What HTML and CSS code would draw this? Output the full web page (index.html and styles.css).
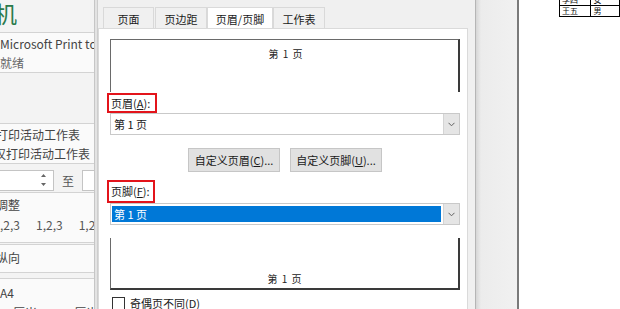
FILE: index.html
```html
<!DOCTYPE html>
<html lang="zh-CN">
<head>
    <meta charset="utf-8" />
    <title>页面设置</title>
    <link rel="stylesheet" href="styles.css">
</head>
<body>
    <div class="screen">
        <aside class="print-panel">
            <div class="panel-title"><span class="cut">打印</span>机</div>
            <div class="panel-box printer-box">
                <div class="line">Microsoft Print to PDF</div>
                <div class="line status">就绪</div>
            </div>
            <div class="panel-box what-box">
                <div class="line shift">打印活动工作表</div>
                <div class="line shift more">仅打印活动工作表</div>
            </div>
            <div class="pages-row">
                <div class="spin">
                    <span class="spin-arrows">
                        <svg width="7" height="16" viewBox="0 0 7 16"><path d="M1 5 L3.5 2 L6 5 Z M1 11 L3.5 14 L6 11 Z" fill="#666"/></svg>
                    </span>
                </div>
                <span class="to">至</span>
                <div class="spin short"></div>
            </div>
            <div class="panel-box collate-box">
                <div class="line shift">调整</div>
                <div class="collate">
                    <span>,2,3</span><span>1,2,3</span><span>1,2</span>
                </div>
            </div>
            <div class="panel-box orient-box">
                <div class="line shift">纵向</div>
            </div>
            <div class="panel-box paper-box">
                <div class="line">A4</div>
                <div class="line shift-small">21 厘米 x 29.7 厘米</div>
            </div>
        </aside>
        <div class="gap"></div>
        <section class="dialog">
            <div class="tabs">
                <div class="tab t1">页面</div>
                <div class="tab t2">页边距</div>
                <div class="tab t3 active">页眉/页脚</div>
                <div class="tab t4">工作表</div>
            </div>
            <div class="tab-panel">
                <div class="preview preview-top">第 1 页</div>
                <div class="mark mark-a"><span class="label">页眉(<u>A</u>):</span></div>
                <div class="combo">
                    <div class="combo-text">第 1 页</div>
                    <div class="combo-btn">
                        <svg width="7" height="5" viewBox="0 0 7 5"><path d="M0.5 0.8 L3.5 3.8 L6.5 0.8" fill="none" stroke="#606060" stroke-width="1"/></svg>
                    </div>
                </div>
                <div class="buttons">
                    <div class="btn">自定义页眉(<u>C</u>)...</div>
                    <div class="btn">自定义页脚(<u>U</u>)...</div>
                </div>
                <div class="mark mark-f"><span class="label">页脚(<u>F</u>):</span></div>
                <div class="combo">
                    <div class="combo-text selected">第 1 页</div>
                    <div class="combo-btn">
                        <svg width="7" height="5" viewBox="0 0 7 5"><path d="M0.5 0.8 L3.5 3.8 L6.5 0.8" fill="none" stroke="#606060" stroke-width="1"/></svg>
                    </div>
                </div>
                <div class="preview preview-bottom">第 1 页</div>
                <div class="check-row">
                    <span class="checkbox"></span>
                    <span>奇偶页不同(<u>D</u>)</span>
                </div>
            </div>
        </section>
        <div class="scroll-strip"></div>
        <div class="sheet">
            <table class="grid">
                <tr><td>李四</td><td>女</td></tr>
                <tr><td>王五</td><td>男</td></tr>
            </table>
        </div>
    </div>
</body>
</html>
```

FILE: styles.css
```css
body {
    margin: 0;
    font-family: "Noto Sans CJK SC", "Noto Sans", sans-serif;
    background: #ffffff;
}
.screen {
    display: flex;
    width: 620px;
    height: 309px;
    overflow: hidden;
    background: #f0f0f0;
}

/* left print settings panel */
.print-panel {
    width: 94px;
    flex: none;
    border-right: 1px solid #c6c6c6;
    background: #f3f3f3;
    overflow: hidden;
    font-size: 12px;
    color: #444;
    white-space: nowrap;
}
.panel-title {
    height: 32px;
    font-size: 23px;
    line-height: 26px;
    color: #2b7a4b;
    margin-left: -52px;
}
.cut {
    color: #2b7a4b;
}
.panel-box {
    background: #fafafa;
    border-top: 1px solid #d3d3d3;
    border-bottom: 1px solid #d3d3d3;
}
.line {
    line-height: 19px;
    height: 19px;
}
.shift {
    margin-left: -4px;
}
.more {
    margin-left: -6px;
}
.shift-small {
    margin-left: -3px;
}
.printer-box {
    height: 38px;
    padding-top: 1px;
}
.status {
    color: #666;
}
.what-box {
    margin-top: 50px;
    height: 38px;
    padding-top: 1px;
}
.pages-row {
    display: flex;
    align-items: center;
    height: 20px;
    margin-top: 6px;
}
.spin {
    width: 53px;
    height: 19px;
    background: #ffffff;
    border: 1px solid #c4c4c4;
    border-left: none;
    display: flex;
    justify-content: flex-end;
    align-items: center;
}
.spin.short {
    flex: 1;
    border-right: none;
    border-left: 1px solid #c4c4c4;
}
.spin-arrows {
    width: 9px;
    margin-right: 4px;
    display: flex;
}
.to {
    width: 28px;
    text-align: center;
    color: #555;
}
.collate-box {
    margin-top: 2px;
    height: 47px;
    padding-top: 2px;
}
.collate {
    display: flex;
    gap: 16px;
    line-height: 22px;
    color: #555;
}
.orient-box {
    margin-top: 1px;
    height: 25px;
    padding-top: 2px;
}
.orient-box .line {
    line-height: 22px;
}
.paper-box {
    margin-top: 5px;
    height: 40px;
    padding-top: 4px;
}
.paper-box .line {
    line-height: 20px;
    height: 20px;
}

.gap {
    width: 2px;
    flex: none;
    background: #e3e3e3;
    border-right: 1px solid #cdcdcd;
}

/* page setup dialog */
.dialog {
    width: 378px;
    flex: none;
    padding-right: 8px;
    box-sizing: border-box;
    border-right: 1px solid #b5b5b5;
    background: #f0f0f0;
    display: flex;
    flex-direction: column;
    font-size: 11px;
    color: #1a1a1a;
}
.tabs {
    display: flex;
    padding: 7px 0 0 5px;
    height: 21px;
}
.tab {
    height: 21px;
    line-height: 22px;
    text-align: center;
    border: 1px solid #d9d9d9;
    border-bottom: none;
    background: #f0f0f0;
    box-sizing: border-box;
}
.t1 { width: 51px; }
.t2 { width: 52px; margin-left: 1px; }
.t3 { width: 66px; }
.t4 { width: 52px; }
.tab.active {
    background: #ffffff;
    border-color: #dadada;
}
.tab-panel {
    flex: 1;
    width: 370px;
    box-sizing: border-box;
    background: #ffffff;
    border: 1px solid #dadada;
    border-bottom: none;
    padding: 0 7px 0 11px;
}
.preview {
    width: 350px;
    height: 53px;
    box-sizing: border-box;
    display: flex;
    justify-content: center;
    font-size: 10px;
    color: #222;
    word-spacing: 2px;
}
.preview-top {
    margin-top: 10px;
    border-top: 1px solid #6a6a6a;
    border-left: 1px solid #6a6a6a;
    border-right: 2px solid #3a3a3a;
    padding: 8px 0 0 2px;
    line-height: 12px;
}
.preview-bottom {
    margin-top: 13px;
    height: 52px;
    border-left: 1px solid #6a6a6a;
    border-bottom: 2px solid #3a3a3a;
    border-right: 2px solid #3a3a3a;
    align-items: flex-end;
    padding: 0 0 3px 0;
    line-height: 12px;
}
.mark {
    display: flex;
}
.label {
    display: inline-block;
    box-sizing: border-box;
    margin-left: -3px;
    border: 2px solid #e3141b;
    padding: 0 5px 0 2px;
    line-height: 16px;
    height: 20px;
}
.mark-a {
    margin-top: 1px;
}
.mark-f {
    margin-top: 8px;
}
.mark-f .label {
    height: 23px;
    line-height: 19px;
    padding-right: 3px;
}
.combo {
    display: flex;
    width: 350px;
    height: 22px;
    box-sizing: border-box;
    border: 1px solid #c9c9c9;
    background: #ffffff;
}
.combo-text {
    flex: 1;
    padding-left: 3px;
    line-height: 20px;
    font-size: 11px;
}
.combo-text.selected {
    margin: 2px 2px 2px 1px;
    line-height: 16px;
    background: #0078d7;
    color: #ffffff;
    padding-left: 2px;
}
.combo-btn {
    width: 15px;
    background: #e5e5e5;
    border-left: 1px solid #d4d4d4;
    display: flex;
    justify-content: center;
    align-items: center;
}
.buttons {
    display: flex;
    justify-content: center;
    gap: 10px;
    margin-top: 13px;
    height: 24px;
}
.btn {
    width: 92px;
    box-sizing: border-box;
    border: 1px solid #c6c6c6;
    background: #e1e1e1;
    line-height: 22px;
    text-align: center;
}
.check-row {
    display: flex;
    align-items: center;
    gap: 5px;
    margin-top: 6px;
    padding-left: 2px;
    line-height: 14px;
}
.checkbox {
    width: 11px;
    height: 11px;
    border: 1px solid #333;
    background: #ffffff;
}

/* area behind the dialog */
.scroll-strip {
    width: 41px;
    flex: none;
    background: linear-gradient(to right, #d6d6d6, #ececec 5px, #f1f1f1);
    border-right: 2px solid #7a7a7a;
}
.sheet {
    flex: 1;
    background: #ffffff;
    overflow: hidden;
}
.grid {
    border-collapse: collapse;
    margin: -6px 0 0 40px;
    font-size: 8px;
    color: #111;
}
.grid td {
    border: 1px solid #000;
    height: 10px;
    line-height: 10px;
    padding: 0 2px;
}
.grid td:first-child {
    width: 34px;
}
.grid td:last-child {
    width: 30px;
}
```
